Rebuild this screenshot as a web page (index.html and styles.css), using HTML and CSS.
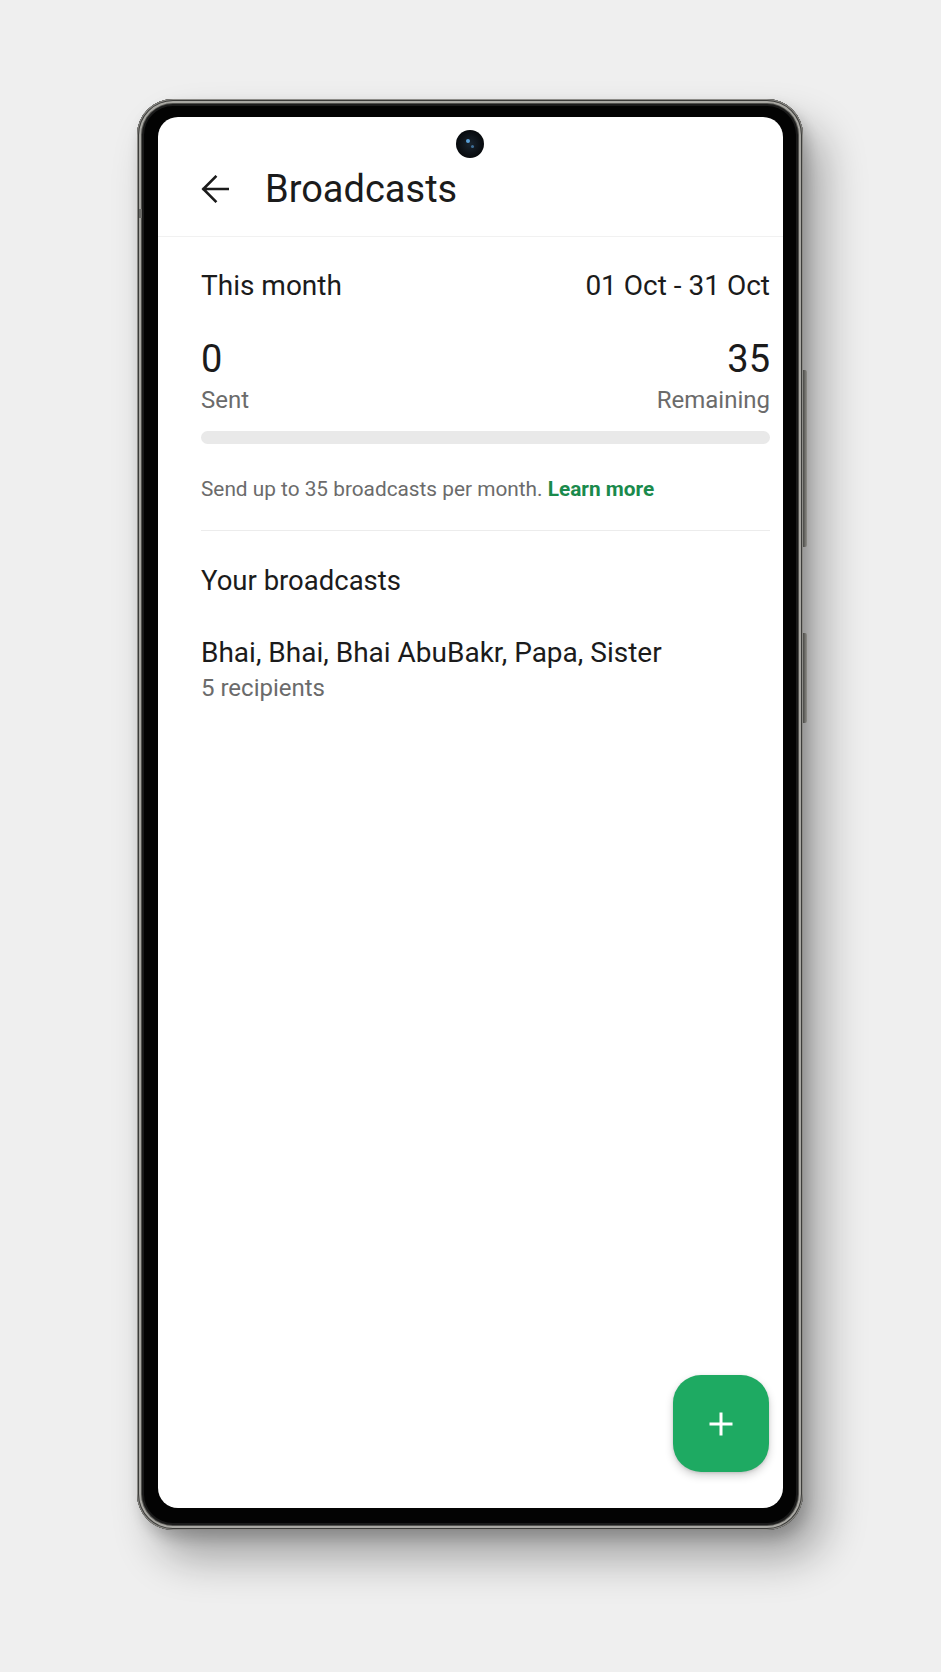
FILE: index.html
```html
<!DOCTYPE html>
<html lang="en">
<head>
<meta charset="utf-8">
<title>Broadcasts</title>
<link rel="stylesheet" href="styles.css">
</head>
<body>
<div class="stage">
  <div class="phone">
    <span class="side-btn side-btn-power"></span>
    <span class="side-btn side-btn-volume"></span>
    <span class="side-mark"></span>
    <div class="screen">
      <span class="camera"><span class="lens-a"></span><span class="lens-b"></span></span>
      <header class="appbar">
        <svg class="back" width="28" height="28" viewBox="0 0 28 28" aria-hidden="true">
          <path d="M27 14H2.5M14.5 1.8L2.3 14l12.2 12.2" fill="none" stroke="#1b1b1b" stroke-width="2.6" stroke-linecap="square" stroke-linejoin="miter"/>
        </svg>
        <h1 class="title">Broadcasts</h1>
      </header>
      <main class="content">
        <div class="row period">
          <span>This month</span>
          <span>01 Oct - 31 Oct</span>
        </div>
        <div class="row counts">
          <span>0</span>
          <span>35</span>
        </div>
        <div class="row labels">
          <span>Sent</span>
          <span>Remaining</span>
        </div>
        <div class="bar"><div class="bar-fill" style="width:0%"></div></div>
        <p class="note">Send up to 35 broadcasts per month. <a class="learn" href="#">Learn more</a></p>
        <hr class="divider">
        <h2 class="section">Your broadcasts</h2>
        <div class="item">
          <div class="item-name">Bhai, Bhai, Bhai AbuBakr, Papa, Sister</div>
          <div class="item-sub">5 recipients</div>
        </div>
      </main>
      <button class="fab" aria-label="New broadcast">
        <svg width="26" height="26" viewBox="0 0 26 26" aria-hidden="true">
          <path d="M13 1.5v23M1.5 13h23" stroke="#fff" stroke-width="3" fill="none"/>
        </svg>
      </button>
    </div>
  </div>
</div>
</body>
</html>
```
FILE: styles.css
```css
html, body {
  margin: 0;
  padding: 0;
}
body {
  background: #efefef;
  font-family: Roboto, "Noto Sans", "Liberation Sans", sans-serif;
  color: #1b1b1b;
  width: 941px;
  height: 1672px;
  overflow: hidden;
}
.stage {
  padding: 99px 0 0 137px;
}
.phone {
  position: relative;
  width: 666px;
  height: 1431px;
  box-sizing: border-box;
  padding: 18px 20px 22px 21px;
  border-radius: 36px;
  background: #030303;
  box-shadow:
    inset 0 0 0 1px #8c8b87,
    inset 0 0 0 2px #3c3c3a,
    inset 0 0 0 4px #a8a7a2,
    inset 0 0 0 5px #50504d,
    inset 0 0 0 7px #1a1a1a,
    20px 28px 44px rgba(0, 0, 0, 0.32),
    4px 8px 14px rgba(0, 0, 0, 0.18);
}
.side-btn {
  position: absolute;
  right: -4px;
  width: 4px;
  border-radius: 0 2px 2px 0;
  background: linear-gradient(90deg, #4a4a47, #8d8c87);
}
.side-btn-power {
  top: 271px;
  height: 177px;
}
.side-btn-volume {
  top: 534px;
  height: 90px;
}
.side-mark {
  position: absolute;
  left: 2px;
  top: 110px;
  width: 3px;
  height: 9px;
  background: #6a6a67;
}
.screen {
  position: relative;
  width: 625px;
  height: 1391px;
  background: #ffffff;
  border-radius: 20px;
  overflow: hidden;
}
.camera {
  position: absolute;
  left: 298px;
  top: 13px;
  width: 28px;
  height: 28px;
  border-radius: 50%;
  background: radial-gradient(circle at 50% 50%, #1a2530 0%, #0b0f14 55%, #000 100%);
}
.lens-a, .lens-b {
  position: absolute;
  border-radius: 50%;
  background: #5aa0d8;
}
.lens-a {
  left: 10px;
  top: 9px;
  width: 4px;
  height: 4px;
}
.lens-b {
  left: 15px;
  top: 15px;
  width: 3px;
  height: 3px;
  background: #3f6f98;
}
.appbar {
  height: 120px;
  box-sizing: border-box;
  padding: 50px 0 0 43px;
  display: flex;
  align-items: flex-start;
  border-bottom: 1px solid #f1f1f1;
}
.back {
  margin-top: 8px;
  flex: none;
}
.title {
  margin: 0 0 0 36px;
  font-size: 38px;
  line-height: 45px;
  font-weight: 400;
  color: #1b1b1b;
}
.content {
  padding: 32px 13px 0 43px;
}
.row {
  display: flex;
  justify-content: space-between;
}
.period {
  font-size: 28px;
  line-height: 34px;
}
.counts {
  margin-top: 34px;
  font-size: 38px;
  line-height: 45px;
}
.labels {
  margin-top: 4px;
  font-size: 24px;
  line-height: 29px;
  color: #6b6b6b;
}
.bar {
  margin-top: 16px;
  height: 13px;
  border-radius: 7px;
  background: #e9e9e9;
  overflow: hidden;
}
.bar-fill {
  height: 100%;
  background: #1daa61;
}
.note {
  margin: 32px 0 0;
  font-size: 20.8px;
  line-height: 26px;
  color: #6b6b6b;
}
.learn {
  color: #1a8a4c;
  font-weight: 700;
  text-decoration: none;
}
.divider {
  margin: 28px 0 0;
  border: 0;
  height: 1px;
  background: #ececec;
}
.section {
  margin: 33px 0 0;
  font-size: 27.5px;
  line-height: 34px;
  font-weight: 400;
  color: #1b1b1b;
}
.item {
  margin-top: 38px;
}
.item-name {
  font-size: 28px;
  line-height: 34px;
  color: #1b1b1b;
}
.item-sub {
  margin-top: 4px;
  font-size: 24px;
  line-height: 29px;
  color: #6b6b6b;
}
.fab {
  position: absolute;
  right: 14px;
  bottom: 36px;
  width: 96px;
  height: 97px;
  border: 0;
  padding: 0;
  border-radius: 28px;
  background: #1eaa62;
  display: flex;
  align-items: center;
  justify-content: center;
  box-shadow: 0 4px 8px rgba(0, 0, 0, 0.18), 0 1px 3px rgba(0, 0, 0, 0.12);
}
```
